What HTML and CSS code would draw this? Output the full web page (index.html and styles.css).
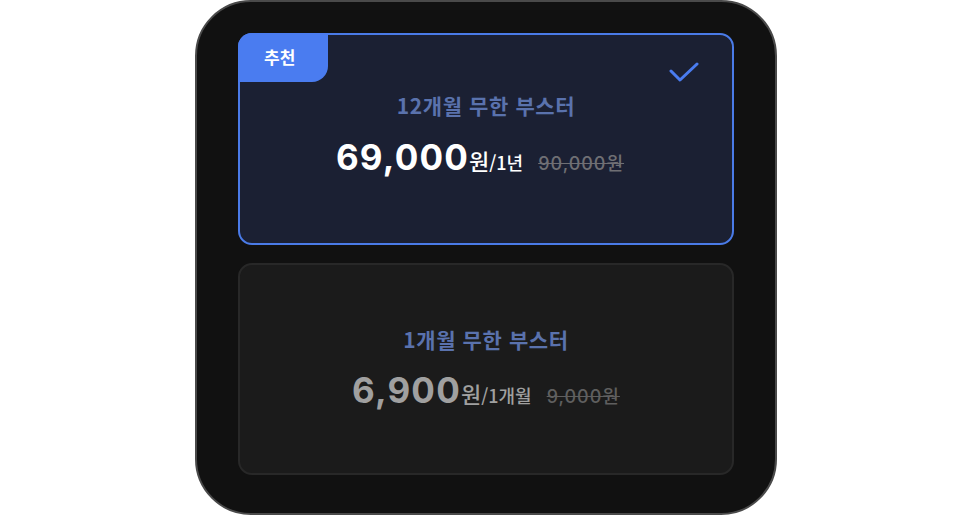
FILE: index.html
```html
<!DOCTYPE html>
<html lang="ko">
<head>
  <meta charset="UTF-8">
  <meta name="viewport" content="width=device-width, initial-scale=1.0">
  <title>무한 부스터</title>
  <link rel="stylesheet" href="styles.css">
</head>
<body>
  <div class="frame">
    <div class="plan selected">
      <span class="badge">추천</span>
      <svg class="check" width="30" height="20" viewBox="0 0 30 20">
        <path d="M2 9 L11 18 L28 2" fill="none" stroke="#4a7cf0" stroke-width="3" stroke-linecap="round" stroke-linejoin="round"/>
      </svg>
      <div class="plan-title">12개월 무한 부스터</div>
      <div class="price">
        <span class="amount">69,000</span><span class="won">원</span><span class="period">/1년</span>
        <span class="old">90,000원</span>
      </div>
    </div>
    <div class="plan">
      <div class="plan-title">1개월 무한 부스터</div>
      <div class="price">
        <span class="amount">6,900</span><span class="won">원</span><span class="period">/1개월</span>
        <span class="old">9,000원</span>
      </div>
    </div>
  </div>
</body>
</html>
```

FILE: styles.css
```css
body {
  margin: 0;
  background: #fff;
  font-family: 'Inter', 'Noto Sans CJK KR', sans-serif;
  display: flex;
  justify-content: center;
}

.frame {
  width: 582px;
  height: 515px;
  margin-right: 3px;
  background: #111;
  border: 2px solid #4a4a4a;
  border-radius: 56px;
  padding: 31px 41px 0;
  box-sizing: border-box;
  display: flex;
  flex-direction: column;
  gap: 18px;
}

.plan {
  position: relative;
  height: 212px;
  border-radius: 14px;
  background: #1b1b1b;
  border: 2px solid #282828;
  box-sizing: border-box;
  display: flex;
  flex-direction: column;
  align-items: center;
  justify-content: center;
  gap: 17px;
  padding-top: 4px;
}

.plan.selected {
  background: #1b2033;
  border-color: #4a7be8;
  padding-top: 0;
  padding-bottom: 4px;
  gap: 18px;
}

.plan.selected .price {
  margin-right: 12px;
}

.badge {
  position: absolute;
  top: -2px;
  left: -2px;
  width: 90px;
  height: 49px;
  background: #4a7cf0;
  color: #fff;
  font-family: 'Noto Sans CJK KR', sans-serif;
  font-weight: 700;
  font-size: 17px;
  line-height: 47px;
  box-sizing: border-box;
  padding-left: 26px;
  border-radius: 14px 0 16px 0;
}

.check {
  position: absolute;
  top: 27px;
  right: 33px;
}

.plan-title {
  font-family: 'Noto Sans CJK KR', sans-serif;
  font-weight: 700;
  font-size: 21px;
  line-height: 28px;
  color: #5a72ad;
  letter-spacing: 0.6px;
}

.price {
  display: flex;
  align-items: baseline;
  color: #fff;
  line-height: 40px;
}

.amount {
  font-size: 35px;
  font-weight: 700;
  letter-spacing: 1.2px;
}

.won {
  font-family: 'Noto Sans CJK KR', sans-serif;
  font-size: 22px;
  font-weight: 500;
}

.period {
  font-size: 18px;
  font-weight: 500;
  font-family: 'Noto Sans CJK KR', sans-serif;
}

.old {
  margin-left: 15px;
  font-size: 18px;
  color: #6f6f74;
  text-decoration: line-through;
  font-weight: 500;
  letter-spacing: 1px;
}

.plan:not(.selected) .price {
  color: #a0a0a0;
}

.plan:not(.selected) .old {
  color: #5f5f5f;
}
```
